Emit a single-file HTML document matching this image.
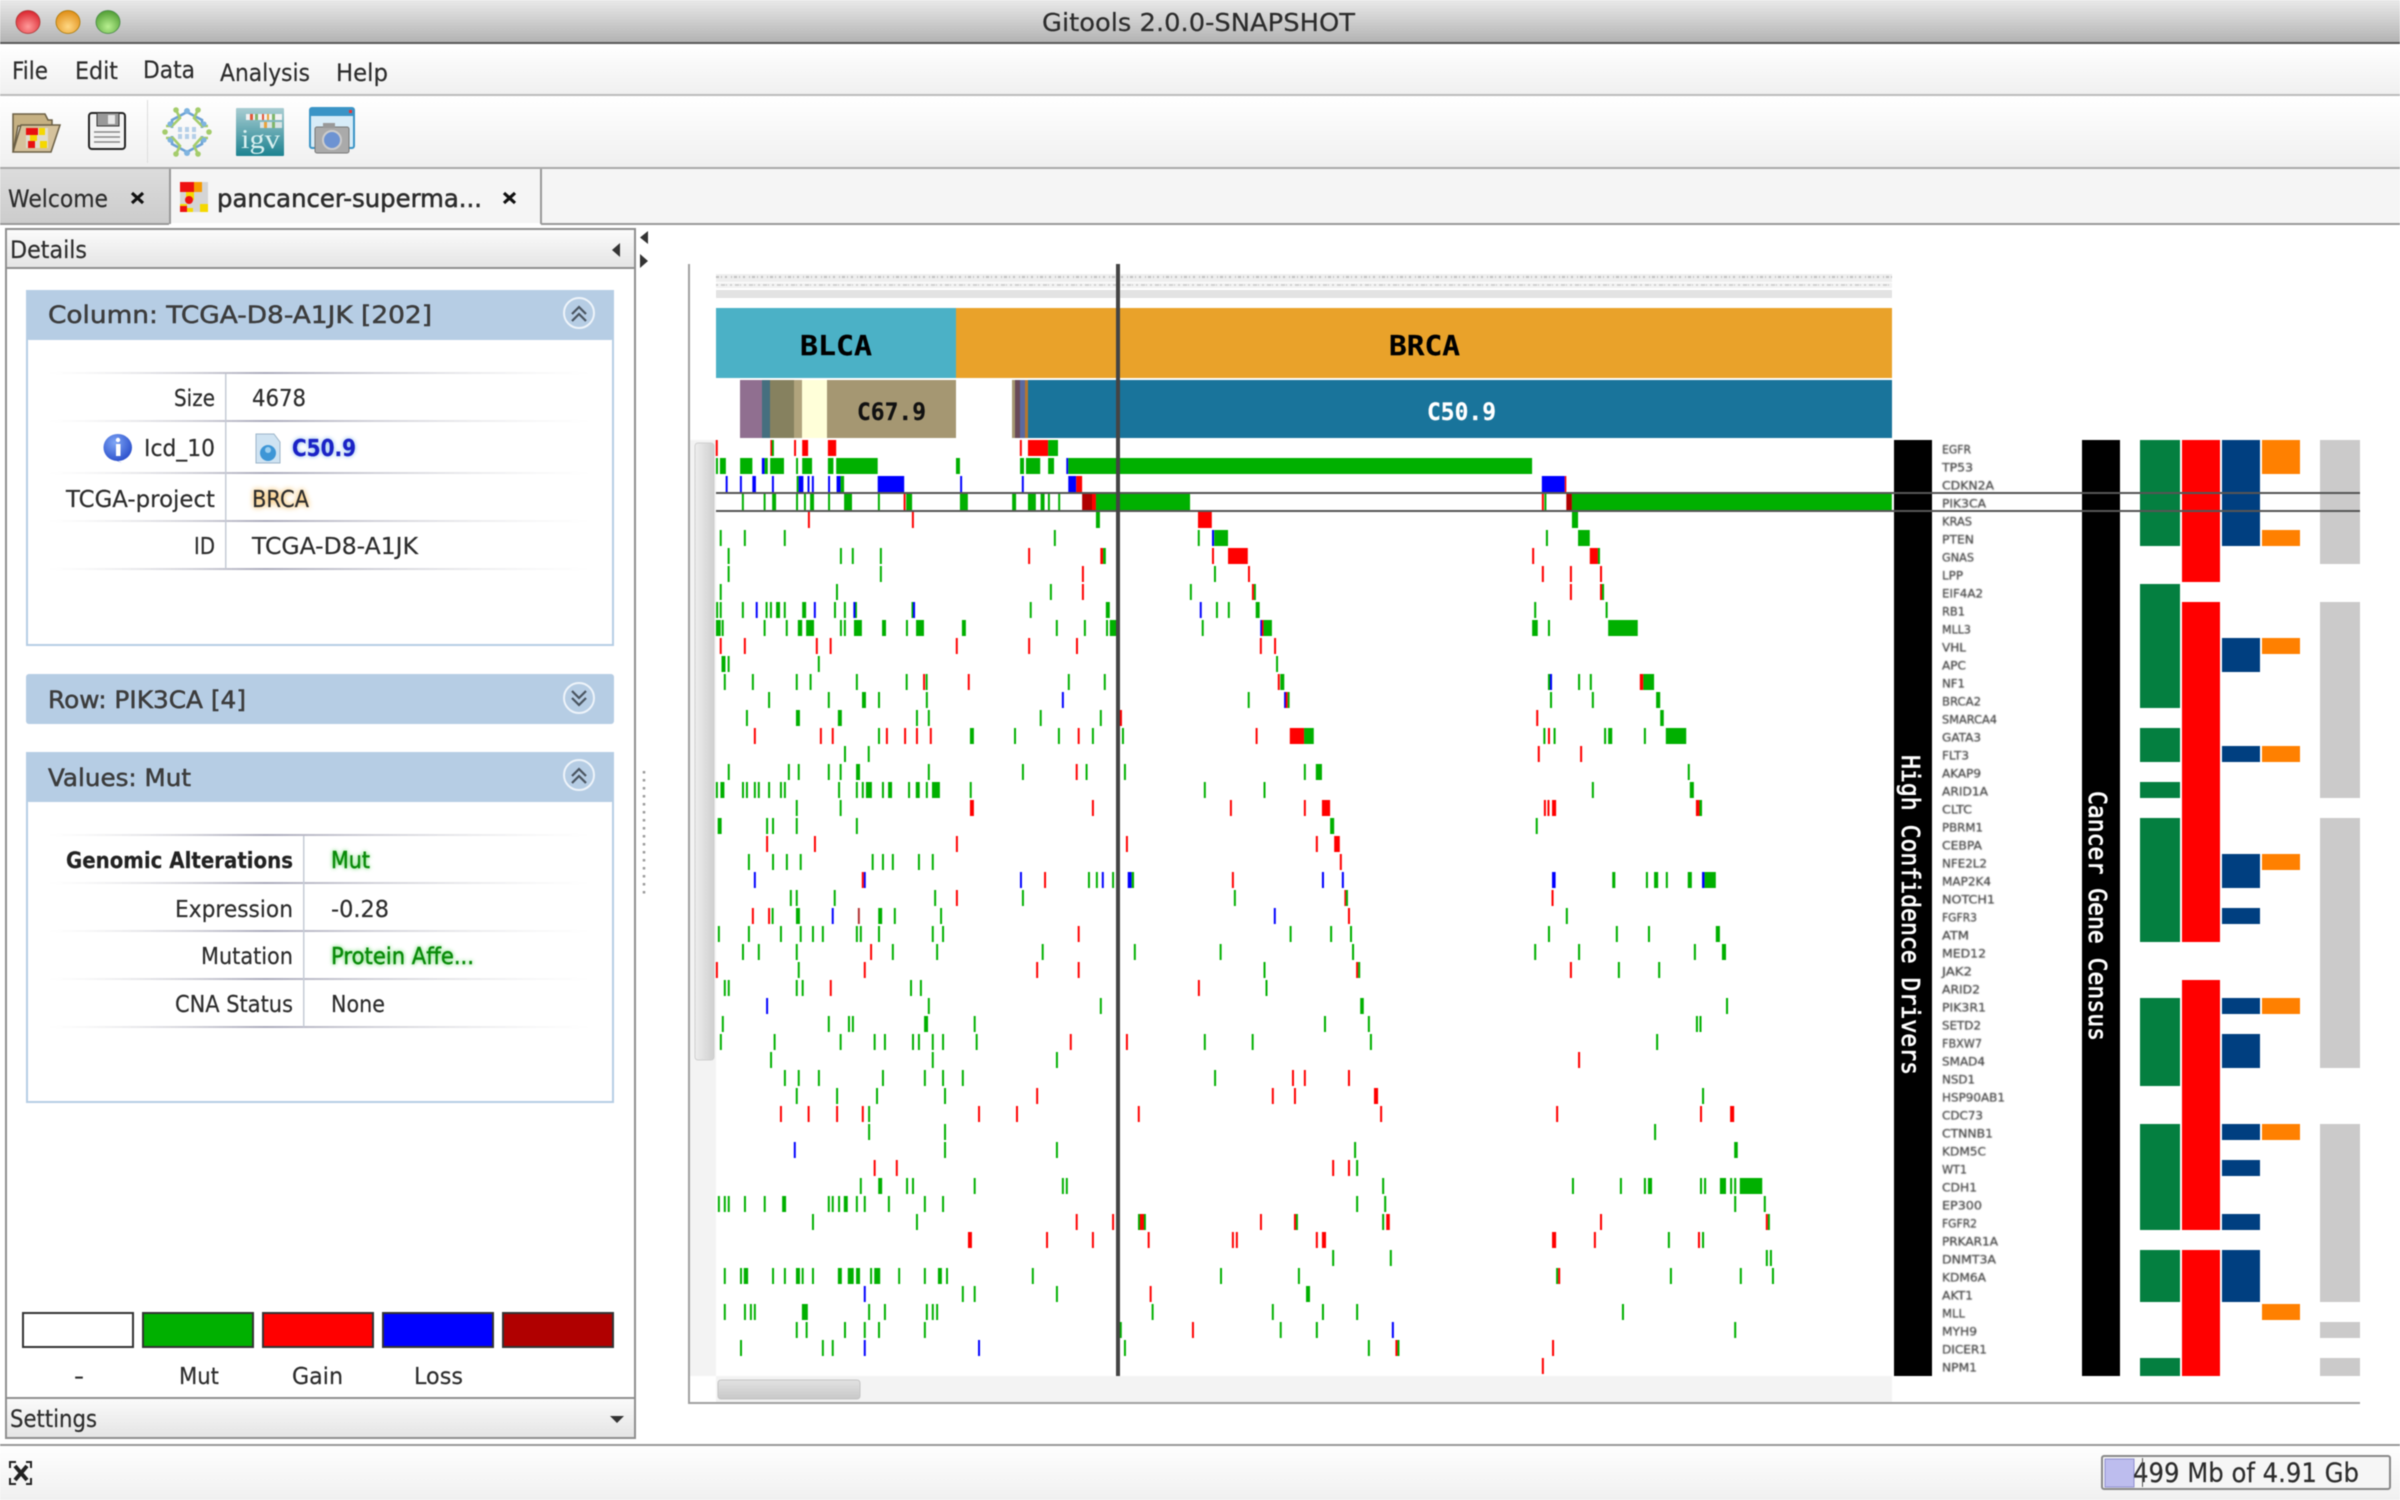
<!DOCTYPE html>
<html>
<head>
<meta charset="utf-8">
<title>Gitools 2.0.0-SNAPSHOT</title>
<style>
html,body{margin:0;padding:0;background:#fff;width:2400px;height:1500px;overflow:hidden}
svg{display:block;filter:blur(.55px)}
text{font-family:"DejaVu Sans","Liberation Sans",sans-serif;fill:#2c2c2c;font-size:23px;stroke:#2c2c2c;stroke-width:.2px}
.m{font-family:"DejaVu Sans Mono","Liberation Mono",monospace}
.b1{font-weight:bold}
.t{stroke:#333;stroke-width:.45px}
text.gn{font-size:11.5px;fill:#444;stroke:#555;stroke-width:.25px;filter:blur(.45px)}
.h path{fill:none}
.g{stroke:#00b000}.r{stroke:#f00}.b{stroke:#00f}.d{stroke:#b03030}
.G{fill:#00b000}.R{fill:#f00}.B{fill:#00f}.D{fill:#b00000}
</style>
</head>
<body>
<svg width="2400" height="1500" viewBox="0 0 2400 1500" xmlns="http://www.w3.org/2000/svg">
<defs>
<linearGradient id="tb" x1="0" y1="0" x2="0" y2="1"><stop offset="0" stop-color="#e9e9e9"/><stop offset="1" stop-color="#b2b2b2"/></linearGradient>
<linearGradient id="mb" x1="0" y1="0" x2="0" y2="1"><stop offset="0" stop-color="#fff"/><stop offset="1" stop-color="#f0f0f0"/></linearGradient>
<linearGradient id="hb" x1="0" y1="0" x2="0" y2="1"><stop offset="0" stop-color="#fbfbfb"/><stop offset="1" stop-color="#e4e4e4"/></linearGradient>
<linearGradient id="wt" x1="0" y1="0" x2="0" y2="1"><stop offset="0" stop-color="#dcdcdc"/><stop offset="1" stop-color="#cccccc"/></linearGradient>
<linearGradient id="vs" x1="0" y1="0" x2="1" y2="0"><stop offset="0" stop-color="#eee"/><stop offset="1" stop-color="#cfcfcf"/></linearGradient>
<linearGradient id="hs" x1="0" y1="0" x2="0" y2="1"><stop offset="0" stop-color="#e2e2e2"/><stop offset="1" stop-color="#c8c8c8"/></linearGradient>
<linearGradient id="ln" x1="0" y1="0" x2="1" y2="0"><stop offset="0" stop-color="#ddd" stop-opacity="0"/><stop offset=".4" stop-color="#aab"/><stop offset="1" stop-color="#ddd" stop-opacity="0"/></linearGradient>
<linearGradient id="ig" x1="0" y1="0" x2="0" y2="1"><stop offset="0" stop-color="#a9cdd2"/><stop offset="1" stop-color="#1c8290"/></linearGradient>
<radialGradient id="lr" cx=".5" cy=".7" r=".7"><stop offset="0" stop-color="#ff9a9a"/><stop offset="1" stop-color="#d9232c"/></radialGradient>
<radialGradient id="ly" cx=".5" cy=".7" r=".7"><stop offset="0" stop-color="#ffd884"/><stop offset="1" stop-color="#df8c14"/></radialGradient>
<radialGradient id="lg" cx=".5" cy=".7" r=".7"><stop offset="0" stop-color="#b8f090"/><stop offset="1" stop-color="#4f9c32"/></radialGradient>
<radialGradient id="ii" cx=".4" cy=".3" r=".8"><stop offset="0" stop-color="#7fa6f5"/><stop offset="1" stop-color="#1b3fc4"/></radialGradient>
</defs>

<!-- title bar -->
<rect width="2400" height="43" fill="url(#tb)"/>
<rect y="42" width="2400" height="2" fill="#5a5a5a"/>
<ellipse cx="28" cy="22" rx="12" ry="11.5" fill="url(#lr)" stroke="#a33" stroke-width=".8"/>
<ellipse cx="68" cy="22" rx="12" ry="11.5" fill="url(#ly)" stroke="#a70" stroke-width=".8"/>
<ellipse cx="108" cy="22" rx="12" ry="11.5" fill="url(#lg)" stroke="#484" stroke-width=".8"/>
<text x="1042" y="31" style="font-size:25px" textLength="313" lengthAdjust="spacingAndGlyphs">Gitools 2.0.0-SNAPSHOT</text>

<!-- menu bar -->
<rect y="44" width="2400" height="50" fill="url(#mb)"/>
<rect y="94" width="2400" height="2" fill="#bbb"/>
<text x="12" y="79" style="font-size:24px" textLength="36" lengthAdjust="spacingAndGlyphs">File</text>
<text x="75" y="79" style="font-size:24px" textLength="43" lengthAdjust="spacingAndGlyphs">Edit</text>
<text x="143" y="78" style="font-size:24px" textLength="52" lengthAdjust="spacingAndGlyphs">Data</text>
<text x="220" y="81" style="font-size:24px" textLength="90" lengthAdjust="spacingAndGlyphs">Analysis</text>
<text x="336" y="81" style="font-size:24px" textLength="52" lengthAdjust="spacingAndGlyphs">Help</text>

<!-- toolbar -->
<rect y="96" width="2400" height="71" fill="url(#mb)"/>
<rect y="167" width="2400" height="2" fill="#a9a9a9"/>
<rect x="147" y="100" width="1" height="63" fill="#ddd"/>
<!-- open icon -->
<path d="M13 114H45L48 120H52V126H18L13 152Z" fill="#c6b183" stroke="#6b5f45" stroke-width="1.5"/>
<path d="M21 125H60L51 152H13Z" fill="#d5c29c" stroke="#6b5f45" stroke-width="1.5"/>
<rect x="26" y="128" width="22" height="20" fill="#e0dccd"/>
<rect x="26" y="128" width="12" height="7" fill="#e81010"/>
<rect x="39" y="128" width="6" height="7" fill="#f5d800"/>
<rect x="30" y="135" width="7" height="6" fill="#f5d800"/>
<rect x="28" y="141" width="7" height="7" fill="#e81010"/>
<rect x="40" y="141" width="7" height="7" fill="#f5d800"/>
<!-- save icon -->
<rect x="89" y="113" width="36" height="36" rx="3" fill="#f3f3f3" stroke="#222" stroke-width="2"/>
<rect x="97" y="113" width="22" height="13" fill="#999" stroke="#333" stroke-width="1"/>
<rect x="108" y="115" width="7" height="9" fill="#e8e8e8"/>
<path d="M94 132H120M94 137H120M94 142H120" stroke="#888" stroke-width="1.5"/>
<!-- network icon -->
<g fill="none" stroke-width="2.6">
<path d="M187 112L172 120L172 128M187 112L202 120L202 128M172 136V144L187 152M202 136V144L187 152" stroke="#6ca2d6"/>
<path d="M176 110L180 118L172 126L166 126M198 110L194 118L202 126L208 126M166 138L173 138L180 146L176 154M208 138L201 138L194 146L198 154" stroke="#a4cc6b"/>
</g>
<g fill="#7fb4e0"><circle cx="187" cy="111" r="3"/><circle cx="187" cy="153" r="3"/><circle cx="170" cy="124" r="2.6"/><circle cx="204" cy="124" r="2.6"/><circle cx="170" cy="140" r="2.6"/><circle cx="204" cy="140" r="2.6"/></g>
<g fill="#a4cc6b"><circle cx="176" cy="110" r="2.8"/><circle cx="198" cy="110" r="2.8"/><circle cx="176" cy="154" r="2.8"/><circle cx="198" cy="154" r="2.8"/><circle cx="165" cy="132" r="2.8"/><circle cx="209" cy="132" r="2.8"/></g>
<path d="M178 127h4v5h-4zM185 127h4v5h-4zM192 127h4v5h-4zM178 134h4v5h-4zM185 134h4v5h-4zM192 134h4v5h-4z" fill="#b4cfe8"/>
<!-- igv icon -->
<rect x="236" y="108" width="48" height="48" rx="1" fill="url(#ig)"/>
<rect x="246" y="114" width="36" height="6" fill="#f2f2f2"/>
<path d="M250 114h3v6h-3zM262 114h2v6h-2z" fill="#e2583a"/><path d="M255 114h3v6h-3zM272 114h3v6h-3z" fill="#7eb66b"/><path d="M267 114h2v6h-2z" fill="#e8a33c"/>
<rect x="260" y="122" width="22" height="6" fill="#d9e4e4"/>
<path d="M264 122h3v6h-3z" fill="#e8a33c"/><path d="M272 122h3v6h-3z" fill="#7eb66b"/>
<text x="241" y="148" textLength="39" lengthAdjust="spacingAndGlyphs" style="font-family:'Liberation Serif',serif;font-size:27px;fill:#d9f0f0;stroke:none">igv</text>
<!-- camera icon -->
<rect x="310" y="108" width="44" height="40" rx="2" fill="#d7ecf8" stroke="#3a94c6" stroke-width="2"/>
<rect x="310" y="108" width="44" height="8" fill="#3a94c6"/>
<rect x="349" y="110" width="3" height="3" fill="#e33"/>
<rect x="315" y="127" width="34" height="26" rx="2" fill="#aaa" stroke="#777"/>
<rect x="323" y="123" width="12" height="5" fill="#999"/>
<circle cx="332" cy="140" r="9" fill="#6d93d2" stroke="#ccc" stroke-width="2"/>

<!-- tabs -->
<rect y="169" width="2400" height="54" fill="#f5f5f5"/>
<rect y="169" width="169" height="54" fill="url(#wt)"/>
<rect y="223" width="169" height="2" fill="#999"/>
<rect x="541" y="223" width="1859" height="2" fill="#999"/>
<rect x="169" y="169" width="2" height="55" fill="#999"/>
<rect x="540" y="169" width="2" height="55" fill="#999"/>
<text x="8" y="207" textLength="100" lengthAdjust="spacingAndGlyphs" style="font-size:24px">Welcome</text>
<path d="M132 193L143 203M143 193L132 203" stroke="#111" stroke-width="3.2"/>
<rect x="180" y="182" width="28" height="30" fill="#d5d5d5"/>
<path d="M180 182h14v10h-14z" fill="#ee1111"/><path d="M194 182h8v10h-8z" fill="#f79a00"/>
<path d="M186 192h8v8h-8zM180 204h7v8h-7z" fill="#f5d800"/>
<circle cx="189" cy="200" r="4" fill="#ee1111"/><rect x="180" y="206" width="7" height="6" fill="#ee1111"/>
<rect x="200" y="204" width="8" height="8" fill="#f5d800"/>
<rect x="187" y="208" width="6" height="4" fill="#f5d800"/>
<text x="217" y="207" class="t" textLength="265" lengthAdjust="spacingAndGlyphs" style="font-size:25px;stroke-width:.6px">pancancer-superma...</text>
<path d="M504 193L515 203M515 193L504 203" stroke="#111" stroke-width="3.2"/>

<!-- details panel -->
<rect x="6" y="229" width="629" height="1209" fill="#fff" stroke="#8f8f8f" stroke-width="2"/>
<rect x="7" y="230" width="627" height="38" fill="url(#hb)"/>
<rect x="6" y="267" width="629" height="2" fill="#8f8f8f"/>
<text x="10" y="258" textLength="77" lengthAdjust="spacingAndGlyphs" style="font-size:24px">Details</text>
<path d="M620 243V257L612 250Z" fill="#333"/>
<path d="M648 231V244L640 237.5Z" fill="#333"/>
<path d="M640 254V268L648 261Z" fill="#333"/>

<!-- column box -->
<rect x="27" y="291" width="586" height="354" fill="#fff" stroke="#b6cde4" stroke-width="2"/>
<rect x="26" y="290" width="588" height="50" rx="3" fill="#b6cde4"/>
<text x="48" y="323" class="t" textLength="384" lengthAdjust="spacingAndGlyphs" style="font-size:24px;fill:#3d3d3d">Column: TCGA-D8-A1JK [202]</text>
<circle cx="579" cy="313" r="15" fill="none" stroke="#eef4fa" stroke-width="2"/>
<path d="M572 314L579 307L586 314M572 321L579 314L586 321" fill="none" stroke="#4a5560" stroke-width="2.2"/>
<g fill="url(#ln)">
<rect x="48" y="372" width="543" height="2"/><rect x="48" y="420" width="543" height="2"/><rect x="48" y="472" width="543" height="2"/><rect x="48" y="520" width="543" height="2"/><rect x="48" y="568" width="543" height="2"/>
</g>
<rect x="225" y="374" width="1.5" height="195" fill="#c6ccd6"/>
<text x="174" y="406" textLength="41" lengthAdjust="spacingAndGlyphs">Size</text>
<text x="144" y="456" textLength="71" lengthAdjust="spacingAndGlyphs">Icd_10</text>
<text x="66" y="507" textLength="149" lengthAdjust="spacingAndGlyphs">TCGA-project</text>
<text x="194" y="554" textLength="21" lengthAdjust="spacingAndGlyphs">ID</text>
<text x="252" y="406" textLength="54" lengthAdjust="spacingAndGlyphs">4678</text>
<text x="292" y="456" class="b1" textLength="64" lengthAdjust="spacingAndGlyphs" style="fill:#1b22c6;stroke:#1b22c6;filter:drop-shadow(0 0 2px #7bb0ea)">C50.9</text>
<text x="252" y="507" textLength="57" lengthAdjust="spacingAndGlyphs" style="filter:drop-shadow(0 0 3px #f5a623)">BRCA</text>
<text x="252" y="554" textLength="166" lengthAdjust="spacingAndGlyphs">TCGA-D8-A1JK</text>
<!-- info icon -->
<path d="M118 434A14 13.5 0 1 1 118 461L122 463L117 461A14 13.5 0 0 1 118 434Z" fill="url(#ii)"/>
<circle cx="118" cy="440" r="2.2" fill="#fff"/><rect x="116" y="444" width="4.5" height="12" fill="#fff"/>
<!-- doc icon -->
<path d="M256 434H274L280 442V463H256Z" fill="#cfe3f2" stroke="#9bb4c8"/>
<circle cx="268" cy="453" r="8" fill="#3e96d6"/><circle cx="268" cy="450" r="3" fill="#9ccff0"/>

<!-- row box -->
<rect x="26" y="674" width="588" height="50" rx="3" fill="#b6cde4"/>
<text x="48" y="708" class="t" textLength="198" lengthAdjust="spacingAndGlyphs" style="font-size:24px;fill:#3d3d3d">Row: PIK3CA [4]</text>
<circle cx="579" cy="698" r="15" fill="none" stroke="#eef4fa" stroke-width="2"/>
<path d="M572 691L579 698L586 691M572 698L579 705L586 698" fill="none" stroke="#4a5560" stroke-width="2.2"/>

<!-- values box -->
<rect x="27" y="753" width="586" height="349" fill="#fff" stroke="#b6cde4" stroke-width="2"/>
<rect x="26" y="752" width="588" height="50" rx="3" fill="#b6cde4"/>
<text x="48" y="786" class="t" textLength="143" lengthAdjust="spacingAndGlyphs" style="font-size:24px;fill:#3d3d3d">Values: Mut</text>
<circle cx="579" cy="775" r="15" fill="none" stroke="#eef4fa" stroke-width="2"/>
<path d="M572 776L579 769L586 776M572 783L579 776L586 783" fill="none" stroke="#4a5560" stroke-width="2.2"/>
<g fill="url(#ln)">
<rect x="48" y="834" width="543" height="2"/><rect x="48" y="882" width="543" height="2"/><rect x="48" y="930" width="543" height="2"/><rect x="48" y="978" width="543" height="2"/><rect x="48" y="1026" width="543" height="2"/>
</g>
<rect x="303" y="836" width="1.5" height="191" fill="#c6ccd6"/>
<text x="66" y="868" class="b1" textLength="227" lengthAdjust="spacingAndGlyphs" style="font-size:22px;fill:#222">Genomic Alterations</text>
<text x="175" y="917" textLength="118" lengthAdjust="spacingAndGlyphs">Expression</text>
<text x="201" y="964" textLength="92" lengthAdjust="spacingAndGlyphs">Mutation</text>
<text x="175" y="1012" textLength="118" lengthAdjust="spacingAndGlyphs">CNA Status</text>
<text x="331" y="868" class="t" textLength="39" lengthAdjust="spacingAndGlyphs" style="fill:#0a8a0a;stroke:#0a8a0a;filter:drop-shadow(0 0 2px #55d455)">Mut</text>
<text x="331" y="917" textLength="58" lengthAdjust="spacingAndGlyphs">-0.28</text>
<text x="331" y="964" class="t" textLength="143" lengthAdjust="spacingAndGlyphs" style="fill:#0a8a0a;stroke:#0a8a0a;filter:drop-shadow(0 0 2px #55d455)">Protein Affe...</text>
<text x="331" y="1012" textLength="54" lengthAdjust="spacingAndGlyphs">None</text>

<!-- legend -->
<g stroke="#333" stroke-width="2">
<rect x="23" y="1313" width="110" height="34" fill="#fff"/>
<rect x="143" y="1313" width="110" height="34" fill="#00b000"/>
<rect x="263" y="1313" width="110" height="34" fill="#f00"/>
<rect x="383" y="1313" width="110" height="34" fill="#00f"/>
<rect x="503" y="1313" width="110" height="34" fill="#b00000"/>
</g>
<text x="74" y="1384" textLength="10" lengthAdjust="spacingAndGlyphs">-</text>
<text x="179" y="1384" textLength="40" lengthAdjust="spacingAndGlyphs">Mut</text>
<text x="292" y="1384" textLength="51" lengthAdjust="spacingAndGlyphs">Gain</text>
<text x="414" y="1384" textLength="49" lengthAdjust="spacingAndGlyphs">Loss</text>

<!-- settings -->
<rect x="6" y="1398" width="629" height="40" fill="url(#hb)" stroke="#8f8f8f" stroke-width="2"/>
<text x="10" y="1427" textLength="87" lengthAdjust="spacingAndGlyphs" style="font-size:24px">Settings</text>
<path d="M610 1416H624L617 1423Z" fill="#333"/>

<!-- splitter dots -->
<path d="M644 771V895" stroke="#999" stroke-width="2.5" stroke-dasharray="2.5 5.5"/>

<!-- status bar -->
<rect y="1445" width="2400" height="55" fill="url(#mb)"/>
<rect y="1444" width="2400" height="2" fill="#999"/>
<path d="M10 1468V1462H16M26 1462H31V1468M31 1478V1484H26M16 1484H10V1478" fill="none" stroke="#222" stroke-width="2"/>
<path d="M15 1466L27 1480M27 1466L15 1480" stroke="#222" stroke-width="4"/>
<rect x="2102" y="1456" width="288" height="33" rx="2" fill="#f6f6f6" stroke="#888" stroke-width="2"/>
<rect x="2105" y="1459" width="29" height="28" fill="#bdbdee" stroke="#8f8fd0"/>
<text x="2133" y="1482" textLength="226" lengthAdjust="spacingAndGlyphs" style="font-size:27px">499 Mb of 4.91 Gb</text>
<rect x="2142" y="1458" width="1" height="29" fill="#555"/>

<!-- heatmap frame -->
<rect x="688" y="264" width="2" height="1139" fill="#a0a0a0"/>
<rect x="690" y="440" width="26" height="936" fill="#f3f3f3"/>
<rect x="695" y="443" width="19" height="617" rx="3" fill="url(#vs)" stroke="#cfcfcf"/>
<rect x="716" y="1376" width="1176" height="26" fill="#f3f3f3"/>
<rect x="718" y="1380" width="142" height="19" rx="3" fill="url(#hs)" stroke="#c4c4c4"/>
<rect x="688" y="1402" width="1672" height="2" fill="#a0a0a0"/>

<!-- header noise -->
<rect x="716" y="274" width="1176" height="8" fill="#eeeeee"/>
<rect x="716" y="283" width="1176" height="5" fill="#f2f2f2"/>
<rect x="716" y="290" width="1176" height="8" fill="#e3e3e3"/>
<path d="M716 277H1892" stroke="#c0c0c0" stroke-width="2" stroke-dasharray="3 2 1 3 2 4 1 2"/>
<path d="M716 285H1892" stroke="#c8c8c8" stroke-width="1.5" stroke-dasharray="2 3 4 1 1 3"/>

<!-- header bars -->
<rect x="716" y="308" width="240" height="70" fill="#4bb1c6"/>
<rect x="956" y="308" width="936" height="70" fill="#e9a22a"/>
<text x="800" y="355" class="m b1" textLength="72" lengthAdjust="spacingAndGlyphs" style="font-size:28px;fill:#000;stroke:#000">BLCA</text>
<text x="1389" y="355" class="m b1" textLength="71" lengthAdjust="spacingAndGlyphs" style="font-size:28px;fill:#000;stroke:#000">BRCA</text>
<rect x="740" y="380" width="22" height="58" fill="#906f90"/>
<rect x="762" y="380" width="8" height="58" fill="#456f7f"/>
<rect x="770" y="380" width="24" height="58" fill="#86815f"/>
<rect x="794" y="380" width="8" height="58" fill="#b0a37c"/>
<rect x="802" y="380" width="25" height="58" fill="#ffffd9"/>
<rect x="827" y="380" width="129" height="58" fill="#a59772"/>
<rect x="1012" y="380" width="3.5" height="58" fill="#a59772"/>
<rect x="1015" y="380" width="5" height="58" fill="#6a4a58"/>
<rect x="1020" y="380" width="5" height="58" fill="#5b6aa0"/>
<rect x="1025" y="380" width="3" height="58" fill="#b5762f"/>
<rect x="1028" y="380" width="864" height="58" fill="#19749b"/>
<text x="857" y="420" class="m b1" textLength="69" lengthAdjust="spacingAndGlyphs" style="font-size:24px;fill:#111;stroke:#111">C67.9</text>
<text x="1427" y="420" class="m b1" textLength="69" lengthAdjust="spacingAndGlyphs" style="font-size:24px;fill:#fff;stroke:#fff">C50.9</text>

<!-- heatmap left, rows 0-12 -->
<g class="h" transform="translate(680 0) scale(.3954 1)" style="stroke-width:5">
<g transform="translate(0 440)"><path class="r" d="M93 0v16M231 0v16M291 0v16M862 0v16"/><path class="g" d="M235 0v16"/><rect class="R" x="309" width="15" height="16"/><rect class="R" x="374" width="21" height="16"/><rect class="R" x="880" width="51" height="16"/><rect class="G" x="931" width="25" height="16"/></g>
<g transform="translate(0 458)"><path class="g" d="M296 0v16"/><rect class="G" x="91" width="5" height="16"/><rect class="G" x="101" width="15" height="16"/><rect class="G" x="152" width="31" height="16"/><rect class="B" x="207" width="7" height="16"/><rect class="G" x="214" width="8" height="16"/><rect class="G" x="228" width="35" height="16"/><rect class="G" x="309" width="25" height="16"/><rect class="G" x="374" width="14" height="16"/><rect class="G" x="395" width="105" height="16"/><rect class="G" x="698" width="10" height="16"/><rect class="G" x="860" width="10" height="16"/><rect class="G" x="875" width="36" height="16"/><rect class="G" x="931" width="15" height="16"/><rect class="B" x="977" width="5" height="16"/><rect class="G" x="982" width="1173" height="16"/></g>
<g transform="translate(0 476)"><path class="b" d="M118 0v16M154 0v16M235 0v16M325 0v16M336 0v16M377 0v16M711 0v16M867 0v16"/><rect class="B" x="183" width="9" height="16"/><rect class="G" x="295" width="5" height="16"/><rect class="B" x="300" width="12" height="16"/><rect class="B" x="396" width="10" height="16"/><rect class="G" x="406" width="9" height="16"/><rect class="B" x="500" width="67" height="16"/><rect class="B" x="982" width="20" height="16"/><rect class="R" x="1002" width="15" height="16"/></g>
<g transform="translate(0 494)"><path class="g" d="M159 0v16M214 0v16M296 0v16M316 0v16M377 0v16M503 0v16M933 0v16M959 0v16"/><path class="r" d="M568 0v16"/><rect class="G" x="233" width="10" height="16"/><rect class="G" x="329" width="10" height="16"/><rect class="G" x="415" width="20" height="16"/><rect class="G" x="572" width="15" height="16"/><rect class="G" x="708" width="20" height="16"/><rect class="G" x="840" width="10" height="16"/><rect class="G" x="880" width="20" height="16"/><rect class="G" x="912" width="10" height="16"/><rect class="D" x="1017" width="25" height="16"/><rect class="R" x="1042" width="10" height="16"/><rect class="G" x="1052" width="238" height="16"/></g>
<g transform="translate(0 512)"><path class="r" d="M326 0v16M589 0v16"/><rect class="G" x="1052" width="10" height="16"/><rect class="R" x="1310" width="35" height="16"/></g>
<g transform="translate(0 530)"><path class="g" d="M103 0v16M164 0v16M265 0v16M948 0v16M1312 0v16"/><path class="b" d="M1348 0v16"/><rect class="G" x="1351" width="35" height="16"/></g>
<g transform="translate(0 548)"><path class="g" d="M123 0v16M407 0v16M437 0v16M508 0v16"/><path class="r" d="M883 0v16M1348 0v16"/><rect class="R" x="1063" width="7" height="16"/><rect class="G" x="1070" width="7" height="16"/><rect class="R" x="1386" width="50" height="16"/></g>
<g transform="translate(0 566)"><path class="g" d="M123 0v16M508 0v16M1353 0v16"/><path class="r" d="M1019 0v16M1439 0v16"/></g>
<g transform="translate(0 584)"><path class="g" d="M103 0v16M397 0v16M938 0v16M1292 0v16M1454 0v16"/><path class="r" d="M1019 0v16M1449 0v16"/></g>
<g transform="translate(0 602)"><path class="g" d="M94 0v16M103 0v16M159 0v16M219 0v16M230 0v16M265 0v16M392 0v16M417 0v16M445 0v16M588 0v16M887 0v16M1358 0v16M1388 0v16"/><path class="b" d="M194 0v16M341 0v16M441 0v16M592 0v16M1317 0v16"/><rect class="G" x="243" width="10" height="16"/><rect class="G" x="309" width="10" height="16"/><rect class="G" x="1077" width="10" height="16"/><rect class="G" x="1456" width="10" height="16"/></g>
<g transform="translate(0 620)"><path class="g" d="M108 0v16M214 0v16M270 0v16M407 0v16M417 0v16M574 0v16M953 0v16M1024 0v16M1080 0v16M1322 0v16"/><path class="b" d="M1470 0v16"/><path class="r" d="M1474 0v16"/><rect class="G" x="91" width="12" height="16"/><rect class="G" x="298" width="11" height="16"/><rect class="G" x="319" width="20" height="16"/><rect class="G" x="440" width="20" height="16"/><rect class="G" x="511" width="10" height="16"/><rect class="G" x="597" width="20" height="16"/><rect class="G" x="713" width="10" height="16"/><rect class="G" x="1087" width="18" height="16"/><rect class="G" x="1476" width="21" height="16"/></g>
<g transform="translate(0 638)"><path class="r" d="M103 0v16M164 0v16M346 0v16M381 0v16M700 0v16M883 0v16M1004 0v16M1469 0v16M1505 0v16"/></g>
<g transform="translate(0 656)"><path class="g" d="M123 0v16M351 0v16M1510 0v16"/><rect class="G" x="105" width="10" height="16"/></g>
</g>

<!-- heatmap left, rows 13-51 -->
<g class="h" transform="translate(690 0) scale(.3954 1)" style="stroke-width:5">
<g transform="translate(0 674)"><path class="g" d="M88 0v16M159 0v16M270 0v16M305 0v16M422 0v16M548 0v16M958 0v16M1049 0v16"/><path class="r" d="M592 0v16M705 0v16M1489 0v16"/><rect class="G" x="596" width="5" height="16"/><rect class="G" x="1493" width="10" height="16"/></g>
<g transform="translate(0 692)"><path class="g" d="M200 0v16M351 0v16M478 0v16M599 0v16M1413 0v16M1514 0v16"/><path class="b" d="M943 0v16M1505 0v16"/><path class="r" d="M1509 0v16"/><rect class="G" x="435" width="10" height="16"/></g>
<g transform="translate(0 710)"><path class="g" d="M144 0v16M574 0v16M604 0v16M887 0v16M1039 0v16"/><path class="r" d="M1090 0v16"/><rect class="G" x="268" width="10" height="16"/><rect class="G" x="374" width="10" height="16"/></g>
<g transform="translate(0 728)"><path class="r" d="M164 0v16M331 0v16M361 0v16M498 0v16M544 0v16M574 0v16M609 0v16M983 0v16M1433 0v16"/><path class="g" d="M478 0v16M822 0v16M933 0v16M1019 0v16M1095 0v16"/><rect class="G" x="708" width="10" height="16"/></g>
<g transform="translate(0 746)"><path class="g" d="M392 0v16M452 0v16"/></g>
<g transform="translate(0 764)"><path class="g" d="M98 0v16M250 0v16M275 0v16M351 0v16M381 0v16M604 0v16M842 0v16M1003 0v16M1100 0v16M1555 0v16"/><path class="r" d="M978 0v16"/><rect class="G" x="420" width="10" height="16"/></g>
<g transform="translate(0 782)"><path class="g" d="M68 0v16M134 0v16M144 0v16M164 0v16M174 0v16M200 0v16M230 0v16M240 0v16M377 0v16M422 0v16M437 0v16M488 0v16M554 0v16M599 0v16M710 0v16M1302 0v16M1453 0v16"/><rect class="G" x="77" width="10" height="16"/><rect class="G" x="445" width="15" height="16"/><rect class="G" x="501" width="10" height="16"/><rect class="G" x="571" width="10" height="16"/><rect class="G" x="612" width="20" height="16"/></g>
<g transform="translate(0 800)"><path class="g" d="M270 0v16M381 0v16"/><path class="r" d="M1019 0v16M1368 0v16M1555 0v16"/><rect class="R" x="708" width="10" height="16"/></g>
<g transform="translate(0 818)"><path class="g" d="M195 0v16M210 0v16M270 0v16M422 0v16"/><rect class="G" x="70" width="10" height="16"/></g>
<g transform="translate(0 836)"><path class="r" d="M195 0v16M316 0v16M675 0v16M1105 0v16"/></g>
<g transform="translate(0 854)"><path class="g" d="M149 0v16M210 0v16M245 0v16M280 0v16M462 0v16M488 0v16M513 0v16M579 0v16M614 0v16"/></g>
<g transform="translate(0 872)"><path class="b" d="M164 0v16M442 0v16M837 0v16M1044 0v16"/><path class="r" d="M437 0v16M898 0v16M1373 0v16"/><path class="g" d="M1009 0v16M1029 0v16M1070 0v16"/><rect class="B" x="1107" width="10" height="16"/><rect class="G" x="1117" width="6" height="16"/></g>
<g transform="translate(0 890)"><path class="g" d="M255 0v16M270 0v16M366 0v16M620 0v16M842 0v16M1378 0v16"/><path class="r" d="M675 0v16"/></g>
<g transform="translate(0 908)"><path class="r" d="M159 0v16M200 0v16"/><path class="g" d="M209 0v16M518 0v16M635 0v16"/><path class="b" d="M361 0v16M1479 0v16"/><path class="d" d="M427 0v16"/><rect class="G" x="268" width="10" height="16"/><rect class="G" x="476" width="10" height="16"/></g>
<g transform="translate(0 926)"><path class="g" d="M73 0v16M149 0v16M230 0v16M280 0v16M311 0v16M336 0v16M422 0v16M432 0v16M478 0v16M614 0v16M640 0v16M1519 0v16"/><path class="r" d="M983 0v16"/></g>
<g transform="translate(0 944)"><path class="g" d="M134 0v16M174 0v16M270 0v16M513 0v16M625 0v16M892 0v16M1125 0v16M1342 0v16"/><path class="r" d="M458 0v16"/></g>
<g transform="translate(0 962)"><path class="r" d="M68 0v16M442 0v16M878 0v16M983 0v16"/><path class="g" d="M275 0v16M1453 0v16"/></g>
<g transform="translate(0 980)"><path class="g" d="M88 0v16M98 0v16M270 0v16M285 0v16M559 0v16M584 0v16M1458 0v16"/><path class="r" d="M356 0v16M1287 0v16"/></g>
<g transform="translate(0 998)"><path class="b" d="M195 0v16"/><path class="g" d="M604 0v16M1039 0v16"/></g>
<g transform="translate(0 1016)"><path class="g" d="M83 0v16M351 0v16M402 0v16M412 0v16M720 0v16"/><rect class="G" x="592" width="10" height="16"/></g>
<g transform="translate(0 1034)"><path class="g" d="M78 0v16M214 0v16M381 0v16M467 0v16M493 0v16M564 0v16M579 0v16M614 0v16M640 0v16M725 0v16M1302 0v16M1423 0v16"/><path class="r" d="M963 0v16M1105 0v16"/></g>
<g transform="translate(0 1052)"><path class="g" d="M205 0v16M614 0v16M928 0v16"/></g>
<g transform="translate(0 1070)"><path class="g" d="M240 0v16M275 0v16M326 0v16M488 0v16M594 0v16M640 0v16M690 0v16M1328 0v16"/><path class="r" d="M1525 0v16M1555 0v16"/></g>
<g transform="translate(0 1088)"><path class="g" d="M270 0v16M372 0v16M473 0v16M645 0v16"/><path class="r" d="M878 0v16M1474 0v16M1530 0v16"/></g>
<g transform="translate(0 1106)"><path class="r" d="M230 0v16M300 0v16M372 0v16M437 0v16M731 0v16M827 0v16M1135 0v16"/><path class="g" d="M453 0v16"/></g>
<g transform="translate(0 1124)"><path class="g" d="M453 0v16M645 0v16"/></g>
<g transform="translate(0 1142)"><path class="b" d="M265 0v16"/><path class="g" d="M645 0v16M928 0v16"/></g>
<g transform="translate(0 1160)"><path class="r" d="M467 0v16M523 0v16"/></g>
<g transform="translate(0 1178)"><path class="g" d="M432 0v16M549 0v16M564 0v16M720 0v16M943 0v16M953 0v16"/><rect class="G" x="476" width="10" height="16"/></g>
<g transform="translate(0 1196)"><path class="g" d="M73 0v16M88 0v16M98 0v16M139 0v16M189 0v16M351 0v16M361 0v16M377 0v16M422 0v16M442 0v16M503 0v16M594 0v16M640 0v16"/><rect class="G" x="233" width="10" height="16"/><rect class="G" x="389" width="10" height="16"/></g>
<g transform="translate(0 1214)"><path class="g" d="M311 0v16M574 0v16M1535 0v16"/><path class="r" d="M978 0v16M1070 0v16M1444 0v16M1530 0v16"/><rect class="G" x="1133" width="20" height="16"/><rect class="R" x="1138" width="10" height="16"/></g>
<g transform="translate(0 1232)"><path class="r" d="M903 0v16M1019 0v16M1160 0v16M1373 0v16M1383 0v16"/><rect class="R" x="703" width="10" height="16"/></g>
<g transform="translate(0 1268)"><path class="g" d="M88 0v16M129 0v16M210 0v16M240 0v16M285 0v16M311 0v16M458 0v16M529 0v16M594 0v16M650 0v16M867 0v16M1343 0v16M1540 0v16"/><rect class="G" x="136" width="11" height="16"/><rect class="G" x="268" width="10" height="16"/><rect class="G" x="374" width="10" height="16"/><rect class="G" x="399" width="15" height="16"/><rect class="G" x="420" width="10" height="16"/><rect class="G" x="466" width="15" height="16"/><rect class="G" x="627" width="10" height="16"/></g>
<g transform="translate(0 1286)"><path class="b" d="M442 0v16"/><path class="g" d="M690 0v16M720 0v16M928 0v16"/><path class="r" d="M1165 0v16"/><rect class="G" x="1558" width="10" height="16"/></g>
<g transform="translate(0 1304)"><path class="g" d="M88 0v16M139 0v16M154 0v16M164 0v16M453 0v16M493 0v16M599 0v16M614 0v16M625 0v16M1170 0v16M1474 0v16"/><rect class="G" x="283" width="15" height="16"/></g>
<g transform="translate(0 1322)"><path class="g" d="M270 0v16M295 0v16M392 0v16M442 0v16M478 0v16M594 0v16M1494 0v16"/><path class="r" d="M1272 0v16"/><rect class="G" x="1084" width="8" height="16"/></g>
<g transform="translate(0 1340)"><path class="g" d="M129 0v16M336 0v16M361 0v16M1100 0v16"/><path class="b" d="M442 0v16M731 0v16"/></g>
</g>

<!-- heatmap right -->
<g class="h" transform="translate(1100 0) scale(.5102 1)" style="stroke-width:4">
<g transform="translate(0 476)"><rect class="B" x="866" width="45" height="16"/><rect class="R" x="911" width="3" height="16"/></g>
<g transform="translate(0 494)"><path class="r" d="M868 0v16"/><path class="g" d="M873 0v16"/><rect class="D" x="914" width="11" height="16"/><rect class="G" x="925" width="627" height="16"/></g>
<g transform="translate(0 512)"><rect class="G" x="925" width="12" height="16"/></g>
<g transform="translate(0 530)"><path class="g" d="M876 0v16"/><rect class="G" x="937" width="23" height="16"/></g>
<g transform="translate(0 548)"><path class="r" d="M849 0v16"/><rect class="R" x="960" width="16" height="16"/><rect class="G" x="976" width="4" height="16"/></g>
<g transform="translate(0 566)"><path class="r" d="M868 0v16M923 0v16M982 0v16"/></g>
<g transform="translate(0 584)"><path class="r" d="M923 0v16M982 0v16"/><path class="g" d="M986 0v16"/></g>
<g transform="translate(0 602)"><path class="g" d="M853 0v16M993 0v16"/></g>
<g transform="translate(0 620)"><path class="g" d="M880 0v16"/><rect class="G" x="847" width="11" height="16"/><rect class="G" x="996" width="58" height="16"/></g>
<g transform="translate(0 674)"><path class="g" d="M880 0v16M939 0v16M962 0v16"/><path class="b" d="M884 0v16"/><rect class="R" x="1058" width="7" height="16"/><rect class="G" x="1065" width="21" height="16"/></g>
<g transform="translate(0 692)"><path class="g" d="M884 0v16M966 0v16"/><rect class="G" x="1090" width="8" height="16"/></g>
<g transform="translate(0 710)"><path class="r" d="M857 0v16"/><rect class="G" x="1098" width="7" height="16"/></g>
<g transform="translate(0 728)"><rect class="R" x="372" width="28" height="16"/><rect class="G" x="400" width="19" height="16"/><path class="g" d="M871 0v16M891 0v16M990 0v16M1068 0v16"/><path class="r" d="M880 0v16"/><rect class="G" x="996" width="8" height="16"/><rect class="G" x="1109" width="40" height="16"/></g>
<g transform="translate(0 746)"><path class="r" d="M860 0v16M943 0v16"/></g>
<g transform="translate(0 764)"><path class="g" d="M1154 0v16"/><rect class="G" x="423" width="12" height="16"/></g>
<g transform="translate(0 782)"><path class="g" d="M966 0v16"/><rect class="G" x="1156" width="8" height="16"/></g>
<g transform="translate(0 800)"><path class="r" d="M872 0v16M879 0v16"/><rect class="R" x="435" width="16" height="16"/><rect class="R" x="886" width="8" height="16"/><rect class="R" x="1168" width="7" height="16"/><rect class="G" x="1175" width="5" height="16"/></g>
<g transform="translate(0 818)"><path class="g" d="M856 0v16"/><rect class="G" x="451" width="8" height="16"/></g>
<g transform="translate(0 836)"><path class="r" d="M425 0v16"/><rect class="R" x="459" width="11" height="16"/></g>
<g transform="translate(0 854)"><path class="r" d="M472 0v16"/></g>
<g transform="translate(0 872)"><path class="b" d="M437 0v16M476 0v16"/><path class="g" d="M1072 0v16M1111 0v16"/><rect class="B" x="886" width="7" height="16"/><rect class="G" x="1004" width="6" height="16"/><rect class="G" x="1086" width="8" height="16"/><rect class="G" x="1152" width="8" height="16"/><rect class="B" x="1180" width="5" height="16"/><rect class="G" x="1185" width="22" height="16"/></g>
<g transform="translate(0 890)"><path class="r" d="M887 0v16"/><rect class="R" x="479" width="3" height="16"/><rect class="G" x="482" width="4" height="16"/></g>
<g transform="translate(0 908)"><path class="r" d="M488 0v16"/><path class="g" d="M915 0v16"/></g>
<g transform="translate(0 926)"><path class="g" d="M453 0v16M492 0v16M880 0v16M1013 0v16M1076 0v16"/><rect class="G" x="1207" width="8" height="16"/></g>
<g transform="translate(0 944)"><path class="g" d="M496 0v16M853 0v16M939 0v16M1166 0v16"/><rect class="G" x="1219" width="8" height="16"/></g>
<g transform="translate(0 962)"><path class="r" d="M504 0v16M923 0v16"/><path class="g" d="M508 0v16M1017 0v16M1096 0v16"/></g>
<g transform="translate(0 998)"><path class="g" d="M1229 0v16"/><rect class="G" x="510" width="7" height="16"/></g>
<g transform="translate(0 1016)"><path class="g" d="M441 0v16M527 0v16M1170 0v16M1177 0v16"/></g>
<g transform="translate(0 1034)"><path class="g" d="M531 0v16M1092 0v16"/></g>
<g transform="translate(0 1052)"><path class="r" d="M939 0v16"/></g>
<g transform="translate(0 1070)"><path class="r" d="M488 0v16"/></g>
<g transform="translate(0 1088)"><path class="g" d="M1182 0v16"/><rect class="R" x="537" width="8" height="16"/></g>
<g transform="translate(0 1106)"><path class="r" d="M551 0v16M896 0v16M1178 0v16"/><rect class="R" x="1235" width="8" height="16"/></g>
<g transform="translate(0 1124)"><path class="g" d="M1088 0v16"/></g>
<g transform="translate(0 1142)"><path class="g" d="M500 0v16"/><rect class="G" x="1243" width="7" height="16"/></g>
<g transform="translate(0 1160)"><path class="r" d="M457 0v16M488 0v16"/><path class="g" d="M504 0v16"/></g>
<g transform="translate(0 1178)"><path class="g" d="M555 0v16M927 0v16M1021 0v16M1068 0v16M1178 0v16M1186 0v16M1237 0v16M1245 0v16"/><rect class="G" x="1074" width="8" height="16"/><rect class="G" x="1215" width="12" height="16"/><rect class="G" x="1254" width="44" height="16"/></g>
<g transform="translate(0 1196)"><path class="g" d="M504 0v16M559 0v16M1245 0v16M1303 0v16"/></g>
<g transform="translate(0 1214)"><path class="g" d="M555 0v16M1311 0v16"/><path class="r" d="M982 0v16M1307 0v16"/><rect class="R" x="561" width="7" height="16"/></g>
<g transform="translate(0 1232)"><path class="r" d="M425 0v16M970 0v16M1174 0v16"/><path class="g" d="M1115 0v16M1182 0v16"/><rect class="R" x="435" width="8" height="16"/><rect class="R" x="886" width="8" height="16"/></g>
<g transform="translate(0 1250)"><path class="g" d="M457 0v16M570 0v16M1307 0v16M1315 0v16"/></g>
<g transform="translate(0 1268)"><path class="g" d="M896 0v16M1119 0v16M1256 0v16M1319 0v16"/><path class="r" d="M900 0v16"/></g>
<g transform="translate(0 1304)"><path class="g" d="M437 0v16M504 0v16M1025 0v16"/></g>
<g transform="translate(0 1322)"><path class="g" d="M425 0v16M1245 0v16"/><path class="b" d="M574 0v16"/></g>
<g transform="translate(0 1340)"><path class="g" d="M527 0v16M585 0v16"/><path class="r" d="M581 0v16M888 0v16"/></g>
<g transform="translate(0 1358)"><path class="r" d="M868 0v16"/></g>
</g>

<!-- black annotation columns -->
<rect x="1894" y="440" width="38" height="936" fill="#000"/>
<rect x="2082" y="440" width="38" height="936" fill="#000"/>
<text transform="translate(1902 755) rotate(90)" class="m" textLength="320" lengthAdjust="spacingAndGlyphs" style="font-size:25px;fill:#fff;stroke:#fff;stroke-width:.7px">High Confidence Drivers</text>
<text transform="translate(2089 791) rotate(90)" class="m" textLength="250" lengthAdjust="spacingAndGlyphs" style="font-size:25px;fill:#fff;stroke:#fff;stroke-width:.7px">Cancer Gene Census</text>

<!-- gene labels -->
<g>
<text class="gn" x="1942" y="453.5" textLength="29" lengthAdjust="spacingAndGlyphs">EGFR</text>
<text class="gn" x="1942" y="471.5" textLength="31" lengthAdjust="spacingAndGlyphs">TP53</text>
<text class="gn" x="1942" y="489.5" textLength="52" lengthAdjust="spacingAndGlyphs">CDKN2A</text>
<text class="gn" x="1942" y="507.5" textLength="44" lengthAdjust="spacingAndGlyphs">PIK3CA</text>
<text class="gn" x="1942" y="525.5" textLength="30" lengthAdjust="spacingAndGlyphs">KRAS</text>
<text class="gn" x="1942" y="543.5" textLength="32" lengthAdjust="spacingAndGlyphs">PTEN</text>
<text class="gn" x="1942" y="561.5" textLength="32" lengthAdjust="spacingAndGlyphs">GNAS</text>
<text class="gn" x="1942" y="579.5" textLength="21" lengthAdjust="spacingAndGlyphs">LPP</text>
<text class="gn" x="1942" y="597.5" textLength="41" lengthAdjust="spacingAndGlyphs">EIF4A2</text>
<text class="gn" x="1942" y="615.5" textLength="23" lengthAdjust="spacingAndGlyphs">RB1</text>
<text class="gn" x="1942" y="633.5" textLength="29" lengthAdjust="spacingAndGlyphs">MLL3</text>
<text class="gn" x="1942" y="651.5" textLength="24" lengthAdjust="spacingAndGlyphs">VHL</text>
<text class="gn" x="1942" y="669.5" textLength="24" lengthAdjust="spacingAndGlyphs">APC</text>
<text class="gn" x="1942" y="687.5" textLength="23" lengthAdjust="spacingAndGlyphs">NF1</text>
<text class="gn" x="1942" y="705.5" textLength="39" lengthAdjust="spacingAndGlyphs">BRCA2</text>
<text class="gn" x="1942" y="723.5" textLength="55" lengthAdjust="spacingAndGlyphs">SMARCA4</text>
<text class="gn" x="1942" y="741.5" textLength="39" lengthAdjust="spacingAndGlyphs">GATA3</text>
<text class="gn" x="1942" y="759.5" textLength="27" lengthAdjust="spacingAndGlyphs">FLT3</text>
<text class="gn" x="1942" y="777.5" textLength="39" lengthAdjust="spacingAndGlyphs">AKAP9</text>
<text class="gn" x="1942" y="795.5" textLength="46" lengthAdjust="spacingAndGlyphs">ARID1A</text>
<text class="gn" x="1942" y="813.5" textLength="30" lengthAdjust="spacingAndGlyphs">CLTC</text>
<text class="gn" x="1942" y="831.5" textLength="41" lengthAdjust="spacingAndGlyphs">PBRM1</text>
<text class="gn" x="1942" y="849.5" textLength="40" lengthAdjust="spacingAndGlyphs">CEBPA</text>
<text class="gn" x="1942" y="867.5" textLength="45" lengthAdjust="spacingAndGlyphs">NFE2L2</text>
<text class="gn" x="1942" y="885.5" textLength="49" lengthAdjust="spacingAndGlyphs">MAP2K4</text>
<text class="gn" x="1942" y="903.5" textLength="53" lengthAdjust="spacingAndGlyphs">NOTCH1</text>
<text class="gn" x="1942" y="921.5" textLength="35" lengthAdjust="spacingAndGlyphs">FGFR3</text>
<text class="gn" x="1942" y="939.5" textLength="27" lengthAdjust="spacingAndGlyphs">ATM</text>
<text class="gn" x="1942" y="957.5" textLength="44" lengthAdjust="spacingAndGlyphs">MED12</text>
<text class="gn" x="1942" y="975.5" textLength="30" lengthAdjust="spacingAndGlyphs">JAK2</text>
<text class="gn" x="1942" y="993.5" textLength="38" lengthAdjust="spacingAndGlyphs">ARID2</text>
<text class="gn" x="1942" y="1011.5" textLength="44" lengthAdjust="spacingAndGlyphs">PIK3R1</text>
<text class="gn" x="1942" y="1029.5" textLength="39" lengthAdjust="spacingAndGlyphs">SETD2</text>
<text class="gn" x="1942" y="1047.5" textLength="40" lengthAdjust="spacingAndGlyphs">FBXW7</text>
<text class="gn" x="1942" y="1065.5" textLength="43" lengthAdjust="spacingAndGlyphs">SMAD4</text>
<text class="gn" x="1942" y="1083.5" textLength="33" lengthAdjust="spacingAndGlyphs">NSD1</text>
<text class="gn" x="1942" y="1101.5" textLength="63" lengthAdjust="spacingAndGlyphs">HSP90AB1</text>
<text class="gn" x="1942" y="1119.5" textLength="41" lengthAdjust="spacingAndGlyphs">CDC73</text>
<text class="gn" x="1942" y="1137.5" textLength="51" lengthAdjust="spacingAndGlyphs">CTNNB1</text>
<text class="gn" x="1942" y="1155.5" textLength="44" lengthAdjust="spacingAndGlyphs">KDM5C</text>
<text class="gn" x="1942" y="1173.5" textLength="25" lengthAdjust="spacingAndGlyphs">WT1</text>
<text class="gn" x="1942" y="1191.5" textLength="35" lengthAdjust="spacingAndGlyphs">CDH1</text>
<text class="gn" x="1942" y="1209.5" textLength="40" lengthAdjust="spacingAndGlyphs">EP300</text>
<text class="gn" x="1942" y="1227.5" textLength="35" lengthAdjust="spacingAndGlyphs">FGFR2</text>
<text class="gn" x="1942" y="1245.5" textLength="56" lengthAdjust="spacingAndGlyphs">PRKAR1A</text>
<text class="gn" x="1942" y="1263.5" textLength="54" lengthAdjust="spacingAndGlyphs">DNMT3A</text>
<text class="gn" x="1942" y="1281.5" textLength="44" lengthAdjust="spacingAndGlyphs">KDM6A</text>
<text class="gn" x="1942" y="1299.5" textLength="31" lengthAdjust="spacingAndGlyphs">AKT1</text>
<text class="gn" x="1942" y="1317.5" textLength="23" lengthAdjust="spacingAndGlyphs">MLL</text>
<text class="gn" x="1942" y="1335.5" textLength="35" lengthAdjust="spacingAndGlyphs">MYH9</text>
<text class="gn" x="1942" y="1353.5" textLength="45" lengthAdjust="spacingAndGlyphs">DICER1</text>
<text class="gn" x="1942" y="1371.5" textLength="35" lengthAdjust="spacingAndGlyphs">NPM1</text>
</g>

<!-- annotation blocks -->
<g fill="#047f40">
<rect x="2140" y="440" width="40" height="106"/><rect x="2140" y="584" width="40" height="124"/><rect x="2140" y="728" width="40" height="34"/><rect x="2140" y="782" width="40" height="16"/><rect x="2140" y="818" width="40" height="124"/><rect x="2140" y="998" width="40" height="88"/><rect x="2140" y="1124" width="40" height="106"/><rect x="2140" y="1250" width="40" height="52"/><rect x="2140" y="1358" width="40" height="18"/>
</g>
<g fill="#f00">
<rect x="2182" y="440" width="38" height="142"/><rect x="2182" y="602" width="38" height="340"/><rect x="2182" y="980" width="38" height="250"/><rect x="2182" y="1250" width="38" height="126"/>
</g>
<g fill="#003f80">
<rect x="2222" y="440" width="38" height="106"/><rect x="2222" y="638" width="38" height="34"/><rect x="2222" y="746" width="38" height="16"/><rect x="2222" y="854" width="38" height="34"/><rect x="2222" y="908" width="38" height="16"/><rect x="2222" y="998" width="38" height="16"/><rect x="2222" y="1034" width="38" height="34"/><rect x="2222" y="1124" width="38" height="16"/><rect x="2222" y="1160" width="38" height="16"/><rect x="2222" y="1214" width="38" height="16"/><rect x="2222" y="1250" width="38" height="52"/>
</g>
<g fill="#ff8000">
<rect x="2262" y="440" width="38" height="34"/><rect x="2262" y="530" width="38" height="16"/><rect x="2262" y="638" width="38" height="16"/><rect x="2262" y="746" width="38" height="16"/><rect x="2262" y="854" width="38" height="16"/><rect x="2262" y="998" width="38" height="16"/><rect x="2262" y="1124" width="38" height="16"/><rect x="2262" y="1304" width="38" height="16"/>
</g>
<g fill="#cbcaca">
<rect x="2320" y="440" width="40" height="124"/><rect x="2320" y="602" width="40" height="196"/><rect x="2320" y="818" width="40" height="250"/><rect x="2320" y="1124" width="40" height="178"/><rect x="2320" y="1322" width="40" height="16"/><rect x="2320" y="1358" width="40" height="18"/>
</g>

<!-- crosshair -->
<rect x="716" y="492" width="1644" height="2" fill="#555"/>
<rect x="716" y="510" width="1644" height="2" fill="#555"/>
<rect x="1116" y="264" width="4" height="1112" fill="#444"/>
</svg>
</body>
</html>
